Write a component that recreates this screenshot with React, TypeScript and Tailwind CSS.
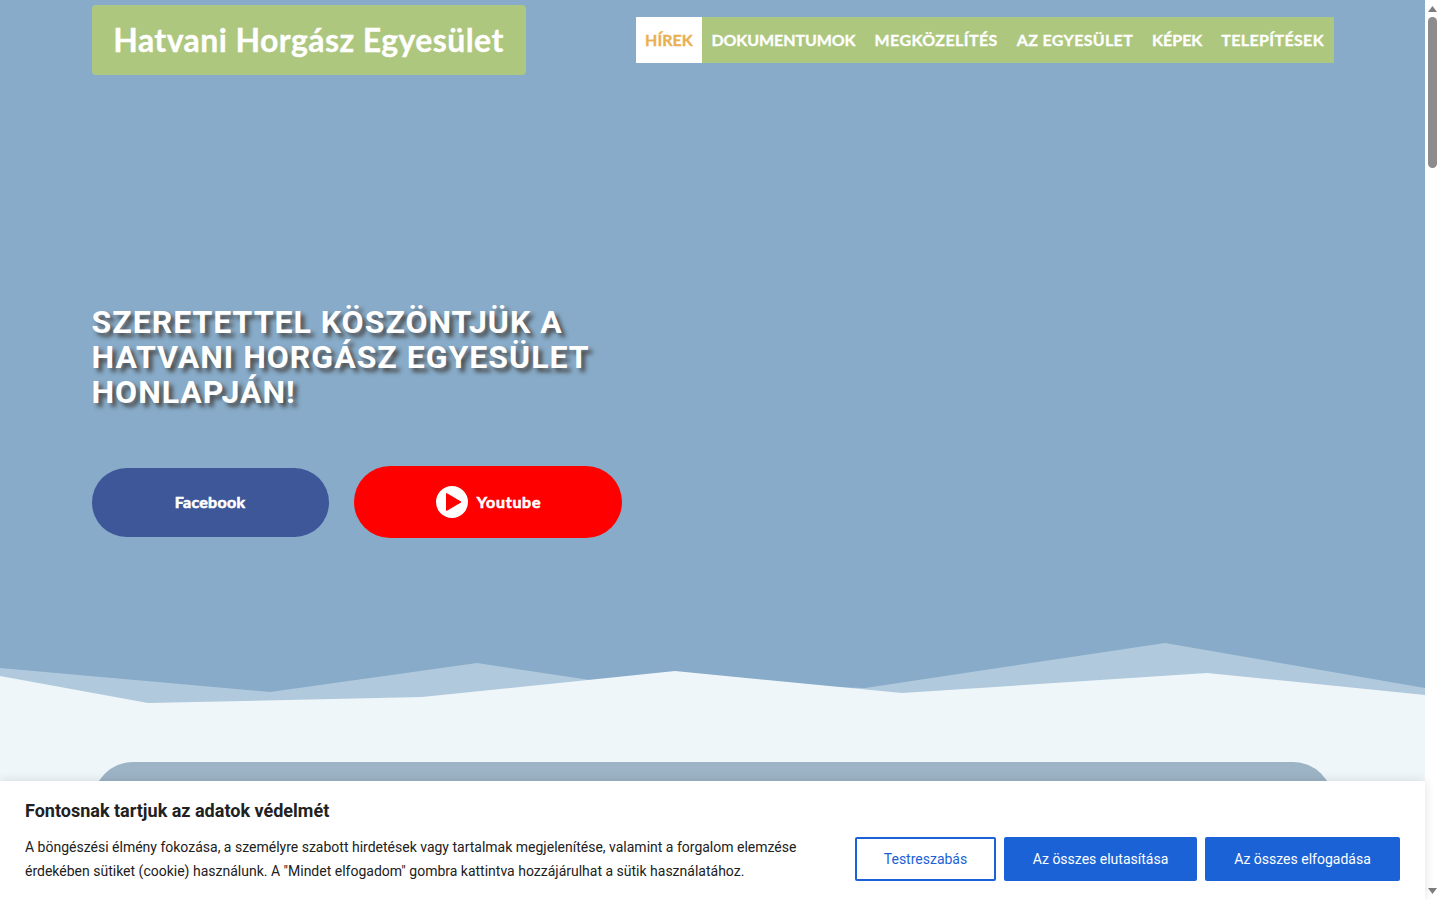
import React from "react";

const navItems = [
  { label: "DOKUMENTUMOK", className: "tracking-[-0.08px]" },
  { label: "MEGKÖZELÍTÉS", className: "tracking-[0.42px]" },
  { label: "AZ EGYESÜLET", className: "tracking-[0.33px]" },
  { label: "KÉPEK", className: "tracking-[0px]" },
  { label: "TELEPÍTÉSEK", className: "tracking-[0.36px]" },
];

function Wave() {
  return (
    <svg className="block w-full h-[60px]" viewBox="0 0 1425 60" preserveAspectRatio="none">
      <rect width="1425" height="60" fill="#87abc8" />
      <polygon points="0,25 270,49 477,20 590,37 865,45 1165,0 1425,45 1425,60 0,60" fill="#b1c9dd" />
      <polygon points="0,33 148,60 422,54 675,28 902,50 1207,30 1425,52 1425,60 0,60" fill="#eef6fa" />
    </svg>
  );
}

export default function App() {
  return (
    <div className="relative flex h-[900px] overflow-hidden bg-white font-['Roboto',sans-serif]">
      <main className="flex-1 min-w-0 h-full overflow-hidden bg-[#eef6fa]">
        <section className="h-[643px] bg-[#87abc8]">
          <div className="mx-auto w-[1242px]">
            <header className="flex items-center justify-between pt-[5px]">
              <div className="flex h-[70px] w-[434px] items-center justify-center rounded-[4px] bg-[#aec77f] font-['Lato',sans-serif] text-[32px] font-bold tracking-[0.42px] text-white [-webkit-text-stroke:0.3px_white]">
                Hatvani Horgász Egyesület
              </div>
              <nav className="flex h-[46px] items-stretch bg-[#aec77f] font-['Lato',sans-serif] text-[16px] font-bold text-white [-webkit-text-stroke:0.3px_white]">
                <a className="flex w-[66px] items-center justify-center bg-white text-[#e9b04f] [-webkit-text-stroke:0.3px_#e9b04f]">HÍREK</a>
                {navItems.map((item) => (
                  <a key={item.label} className={`flex items-center px-[9.5px] ${item.className}`}>{item.label}</a>
                ))}
              </nav>
            </header>
            <h1 className="mt-[230px] w-[520px] text-[32px] leading-[35px] font-bold tracking-[1px] text-white [text-shadow:4px_4px_4px_#4a4a4a]">
              SZERETETTEL KÖSZÖNTJÜK A HATVANI HORGÁSZ EGYESÜLET HONLAPJÁN!
            </h1>
            <div className="mt-[56px] flex items-center gap-[25px] font-['Lato',sans-serif] text-[16px] font-bold text-white [-webkit-text-stroke:0.6px_white]">
              <a className="flex h-[69px] w-[237px] items-center justify-center rounded-full bg-[#3d5799] tracking-[0.3px]">Facebook</a>
              <a className="flex h-[72px] w-[268px] items-center justify-center gap-[9px] rounded-full bg-[#ff0000] pl-[2px] tracking-[0.7px]">
                <svg width="32" height="32" viewBox="0 0 32 32">
                  <circle cx="16" cy="16" r="16" fill="#fff" />
                  <polygon points="10.5,7.5 25,16 10.5,24.5" fill="#ff0000" stroke="#ff0000" strokeWidth="1" strokeLinejoin="round" />
                </svg>
                Youtube
              </a>
            </div>
          </div>
        </section>
        <Wave />
        <div className="pt-[59px]">
          <div className="mx-auto h-[200px] w-[1240px] rounded-[40px] bg-[#9db4c6]" />
        </div>
      </main>

      <div className="flex h-full w-[15px] shrink-0 flex-col items-center bg-white">
        <svg className="mt-[5px]" width="11" height="8" viewBox="0 0 11 8"><polygon points="5.5,1 10,7 1,7" fill="#7d7d7d" /></svg>
        <div className="mt-[4px] h-[151px] w-[9px] rounded-full bg-[#8c8c8c]" />
        <svg className="mt-auto mb-[5px]" width="11" height="8" viewBox="0 0 11 8"><polygon points="1,1 10,1 5.5,7" fill="#7d7d7d" /></svg>
      </div>

      <aside className="absolute bottom-0 left-0 h-[119px] w-[1425px] bg-white px-[25px] pt-[19px] shadow-[0_0_10px_rgba(0,0,0,0.12)]">
        <h2 className="text-[18px] leading-[22px] font-bold text-[#212121]">Fontosnak tartjuk az adatok védelmét</h2>
        <div className="mt-[13px] flex items-start justify-between">
          <p className="w-[790px] text-[14px] leading-[24px] text-[#212121]">
            A böngészési élmény fokozása, a személyre szabott hirdetések vagy tartalmak megjelenítése, valamint a forgalom elemzése érdekében sütiket (cookie) használunk. A "Mindet elfogadom" gombra kattintva hozzájárulhat a sütik használatához.
          </p>
          <div className="mt-[2px] flex gap-[8px] text-[14px]">
            <button className="h-[44px] w-[141px] rounded-[2px] border-2 border-[#1a62d6] bg-white text-[#1a62d6]">Testreszabás</button>
            <button className="h-[44px] w-[193px] rounded-[2px] bg-[#1a62d6] text-white">Az összes elutasítása</button>
            <button className="h-[44px] w-[195px] rounded-[2px] bg-[#1a62d6] text-white">Az összes elfogadása</button>
          </div>
        </div>
      </aside>
    </div>
  );
}
